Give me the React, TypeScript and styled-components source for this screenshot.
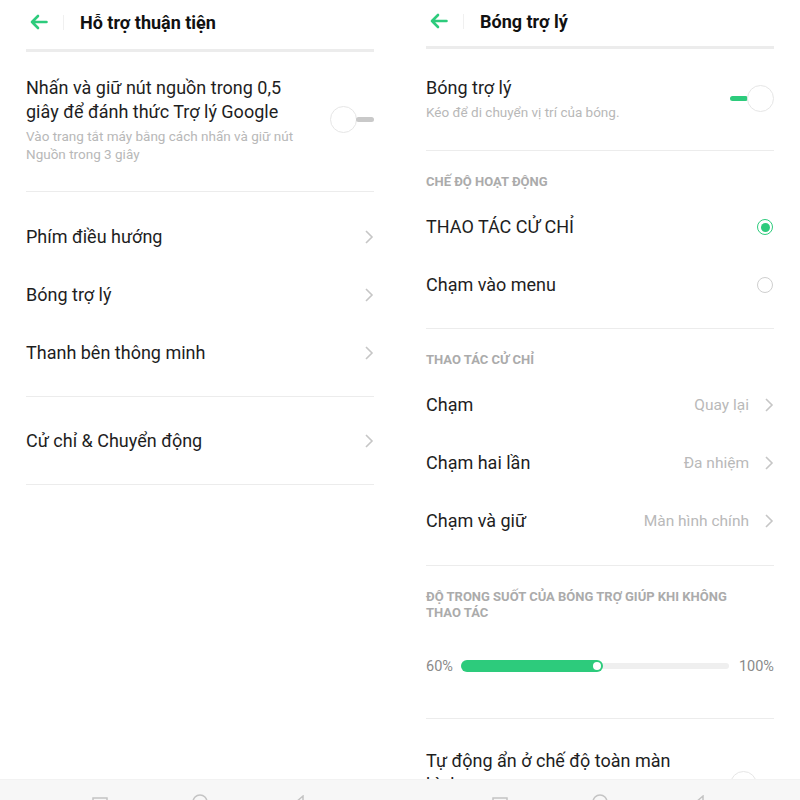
import * as React from "react";
import styled, { createGlobalStyle } from "styled-components";

const GREEN = "#2dcb7c";

const GlobalStyle = createGlobalStyle`
  html, body {
    margin: 0;
    padding: 0;
    background: #ffffff;
  }
  body {
    font-family: Roboto, "Noto Sans", "Liberation Sans", sans-serif;
    color: #1e1e1e;
  }
`;

const Screen = styled.div`
  display: flex;
  width: 800px;
  height: 800px;
`;

const Phone = styled.div`
  width: 400px;
  height: 800px;
  display: flex;
  flex-direction: column;
  background: #fff;
`;

const Content = styled.div`
  flex: 1;
  overflow: hidden;
  padding: 0 26px;
`;

const Header = styled.div<{ $h: number }>`
  height: ${(p) => p.$h}px;
  display: flex;
  align-items: center;
  padding-left: 4px;
`;

const HeaderRule = styled.div`
  width: 1px;
  height: 15px;
  background: #f0f0f0;
  margin-left: 15px;
`;

const Title = styled.h1`
  margin: 0 0 0 16px;
  font-size: 18px;
  font-weight: 700;
  color: #111;
`;

const TopBar = styled.div<{ $mt: number }>`
  height: 3px;
  margin-top: ${(p) => p.$mt}px;
  background: #ececec;
`;

const Group = styled.div<{ $pt: number; $pb: number; $last?: boolean }>`
  padding: ${(p) => p.$pt}px 0 ${(p) => p.$pb}px;
  border-bottom: ${(p) => (p.$last ? "none" : "1px solid #ececec")};
`;

const SwitchRow = styled.div<{ $end?: boolean }>`
  display: flex;
  align-items: ${(p) => (p.$end ? "flex-end" : "center")};
  justify-content: space-between;
`;

const TextBlock = styled.div<{ $w?: number }>`
  max-width: ${(p) => p.$w ?? 300}px;
`;

const MainText = styled.div`
  font-size: 18px;
  line-height: 24px;
  color: #1e1e1e;
`;

const SubText = styled.div`
  margin-top: 3px;
  font-size: 13.5px;
  line-height: 18px;
  color: #b8b8b8;
`;

const SectionLabel = styled.div<{ $w?: number }>`
  font-size: 13px;
  font-weight: 700;
  line-height: 16px;
  color: #ababab;
  max-width: ${(p) => p.$w ?? 340}px;
  margin-bottom: 8px;
`;

const Row = styled.div`
  height: 58px;
  display: flex;
  align-items: center;
  justify-content: space-between;
`;

const RowRight = styled.div`
  display: flex;
  align-items: center;
  gap: 15px;
`;

const Value = styled.span`
  font-size: 15.5px;
  color: #b9b9b9;
`;

const ToggleWrap = styled.div`
  display: flex;
  align-items: center;
  width: 44px;
  height: 26px;
`;

const Knob = styled.div`
  width: 25px;
  height: 25px;
  border-radius: 50%;
  border: 1px solid #e6e6e6;
  background: #fff;
  flex-shrink: 0;
`;

const Track = styled.div<{ $on: boolean }>`
  width: 18px;
  height: 5px;
  border-radius: 3px;
  background: ${(p) => (p.$on ? GREEN : "#c9c9c9")};
  margin: ${(p) => (p.$on ? "0 -1px 0 0" : "0 0 0 -1px")};
`;

const RadioRing = styled.div<{ $on: boolean }>`
  width: 14px;
  height: 14px;
  border-radius: 50%;
  border: 1.5px solid ${(p) => (p.$on ? GREEN : "#cfcfcf")};
  display: flex;
  align-items: center;
  justify-content: center;
  margin-right: 1px;
`;

const RadioDot = styled.div`
  width: 9px;
  height: 9px;
  border-radius: 50%;
  background: ${GREEN};
`;

const SliderRow = styled.div`
  height: 58px;
  margin-top: 16px;
  display: flex;
  align-items: center;
  gap: 8px;
  font-size: 14.5px;
  color: #8a8a8a;
`;

const SliderTrack = styled.div`
  flex: 1;
  height: 6px;
  border-radius: 3px;
  background: #efefef;
  display: flex;
  align-items: center;
  margin-right: 2px;
`;

const SliderFill = styled.div`
  height: 12px;
  border-radius: 6px;
  background: ${GREEN};
  display: flex;
  align-items: center;
  justify-content: flex-end;
  padding-right: 2px;
  box-sizing: border-box;
`;

const SliderThumb = styled.div`
  width: 8px;
  height: 8px;
  border-radius: 50%;
  background: #fff;
`;

const NavBar = styled.div`
  height: 20px;
  background: #f7f7f7;
  border-top: 1px solid #f2f2f2;
  overflow: hidden;
  display: flex;
  align-items: flex-start;
  padding-left: 92px;
  gap: 84px;
`;

const NavIcon = styled.svg<{ $top: number }>`
  margin-top: ${(p) => p.$top}px;
  flex-shrink: 0;
`;

const BackArrow = () => (
  <svg width="18" height="16" viewBox="0 0 18 16" fill="none">
    <path
      d="M8 2 L2 8 L8 14 M2 8 H16.5"
      stroke={GREEN}
      strokeWidth="2.6"
      strokeLinecap="round"
      strokeLinejoin="round"
    />
  </svg>
);

const Chevron = () => (
  <svg width="10" height="16" viewBox="0 0 10 16" fill="none">
    <path d="M2 2 L8 8 L2 14" stroke="#c6c6c6" strokeWidth="1.6" />
  </svg>
);

const Toggle: React.FC<{ on: boolean }> = ({ on }) => (
  <ToggleWrap>
    {on ? (
      <>
        <Track $on />
        <Knob />
      </>
    ) : (
      <>
        <Knob />
        <Track $on={false} />
      </>
    )}
  </ToggleWrap>
);

const Radio: React.FC<{ on: boolean }> = ({ on }) => (
  <RadioRing $on={on}>{on && <RadioDot />}</RadioRing>
);

const Nav = () => (
  <NavBar>
    <NavIcon $top={17} width="16" height="16" viewBox="0 0 16 16" fill="none">
      <rect x="1" y="1" width="14" height="14" stroke="#c4c4c4" strokeWidth="1.5" />
    </NavIcon>
    <NavIcon $top={14} width="16" height="16" viewBox="0 0 16 16" fill="none">
      <circle cx="8" cy="8" r="7" stroke="#c4c4c4" strokeWidth="1.5" />
    </NavIcon>
    <NavIcon $top={15} width="16" height="16" viewBox="0 0 16 16" fill="none">
      <path d="M11 1 L3 8 L11 15 Z" stroke="#c4c4c4" strokeWidth="1.5" />
    </NavIcon>
  </NavBar>
);

const LinkRow: React.FC<{ label: string; value?: string }> = ({ label, value }) => (
  <Row>
    <MainText>{label}</MainText>
    <RowRight>
      {value && <Value>{value}</Value>}
      <Chevron />
    </RowRight>
  </Row>
);

const ConvenienceScreen = () => (
  <Phone>
    <Content>
      <Header $h={44}>
        <BackArrow />
        <HeaderRule />
        <Title>Hỗ trợ thuận tiện</Title>
      </Header>
      <TopBar $mt={5} />
      <Group $pt={24} $pb={28}>
        <SwitchRow>
          <TextBlock $w={282}>
            <MainText>Nhấn và giữ nút nguồn trong 0,5 giây để đánh thức Trợ lý Google</MainText>
            <SubText>Vào trang tắt máy bằng cách nhấn và giữ nút Nguồn trong 3 giây</SubText>
          </TextBlock>
          <Toggle on={false} />
        </SwitchRow>
      </Group>
      <Group $pt={16} $pb={14}>
        <LinkRow label="Phím điều hướng" />
        <LinkRow label="Bóng trợ lý" />
        <LinkRow label="Thanh bên thông minh" />
      </Group>
      <Group $pt={15} $pb={14}>
        <LinkRow label="Cử chỉ & Chuyển động" />
      </Group>
    </Content>
    <Nav />
  </Phone>
);

const BallScreen = () => (
  <Phone>
    <Content>
      <Header $h={42}>
        <BackArrow />
        <HeaderRule />
        <Title>Bóng trợ lý</Title>
      </Header>
      <TopBar $mt={4} />
      <Group $pt={27} $pb={29}>
        <SwitchRow>
          <TextBlock>
            <MainText>Bóng trợ lý</MainText>
            <SubText>Kéo để di chuyển vị trí của bóng.</SubText>
          </TextBlock>
          <Toggle on />
        </SwitchRow>
      </Group>
      <Group $pt={23} $pb={14}>
        <SectionLabel>CHẾ ĐỘ HOẠT ĐỘNG</SectionLabel>
        <Row>
          <MainText>THAO TÁC CỬ CHỈ</MainText>
          <Radio on />
        </Row>
        <Row>
          <MainText>Chạm vào menu</MainText>
          <Radio on={false} />
        </Row>
      </Group>
      <Group $pt={23} $pb={15}>
        <SectionLabel>THAO TÁC CỬ CHỈ</SectionLabel>
        <LinkRow label="Chạm" value="Quay lại" />
        <LinkRow label="Chạm hai lần" value="Đa nhiệm" />
        <LinkRow label="Chạm và giữ" value="Màn hình chính" />
      </Group>
      <Group $pt={23} $pb={23}>
        <SectionLabel $w={330}>ĐỘ TRONG SUỐT CỦA BÓNG TRỢ GIÚP KHI KHÔNG THAO TÁC</SectionLabel>
        <SliderRow>
          <span>60%</span>
          <SliderTrack>
            <SliderFill style={{ width: `${(139 / 263) * 100}%` }}>
              <SliderThumb />
            </SliderFill>
          </SliderTrack>
          <span>100%</span>
        </SliderRow>
      </Group>
      <Group $pt={30} $pb={20} $last>
        <SwitchRow $end>
          <TextBlock $w={270}>
            <MainText>Tự động ẩn ở chế độ toàn màn hình</MainText>
          </TextBlock>
          <Toggle on={false} />
        </SwitchRow>
      </Group>
    </Content>
    <Nav />
  </Phone>
);

export default function App() {
  return (
    <>
      <GlobalStyle />
      <Screen>
        <ConvenienceScreen />
        <BallScreen />
      </Screen>
    </>
  );
}
